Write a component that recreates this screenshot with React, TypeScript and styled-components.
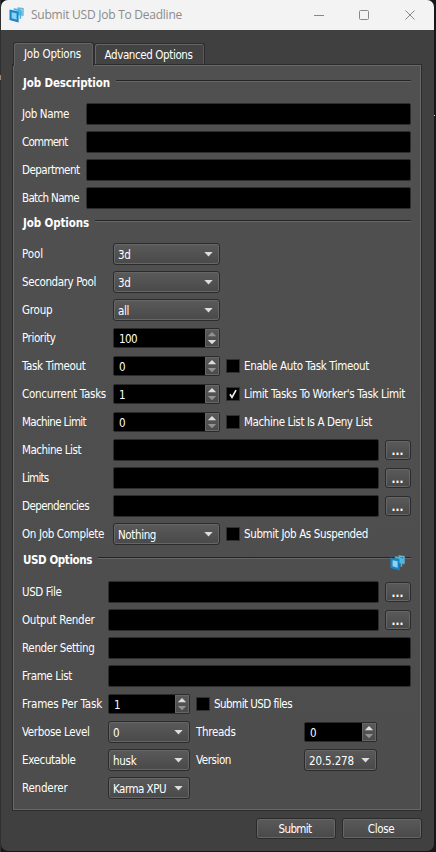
import React, { useLayoutEffect, useRef, useState } from 'react';
import styled, { createGlobalStyle, css } from 'styled-components';

const GlobalStyle = createGlobalStyle`
  * { box-sizing: border-box; }
  html, body { margin: 0; padding: 0; background: #111; overflow: hidden; }
`;

const uiFont = '"DejaVu Sans Condensed", "DejaVu Sans", sans-serif';

const Desktop = styled.div`
  position: relative;
  width: 436px;
  height: 852px;
  padding: 0 2px 1px 1px;
  background: linear-gradient(90deg, #303030 0, #303030 1px, #15171a 1px);
  overflow: hidden;
  font: 11.5px ${uiFont};
  font-stretch: condensed;
  color: #fff;
`;

const Speck = styled.div<{ $x: number; $y: number; $h: number; $color: string }>`
  position: absolute;
  left: ${p => p.$x}px;
  top: ${p => p.$y}px;
  width: 1px;
  height: ${p => p.$h}px;
  background: ${p => p.$color};
`;

const Window = styled.div`
  display: flex;
  flex-direction: column;
  width: 433px;
  height: 851px;
  border-radius: 7px;
  overflow: hidden;
  background: #404040;
`;

const TitleBar = styled.header`
  display: flex;
  align-items: center;
  flex: 0 0 30px;
  height: 30px;
  padding-left: 8px;
  background: #f3f3f3;
  color: #8b8b8b;
  font: 12px "Open Sans", "Noto Sans", sans-serif;
`;

const TitleText = styled.div`
  flex: 1;
  padding-left: 7px;
  line-height: 30px;
  height: 30px;
`;

const WindowControls = styled.div`
  display: flex;
  width: 138px;
  margin-right: 1px;
  svg { display: block; width: 46px; height: 28px; }
`;

const Tabs = styled.nav`
  display: flex;
  align-items: flex-end;
  flex: 0 0 35px;
  height: 35px;
  padding: 12px 0 0 12px;
  position: relative;
  z-index: 1;
`;

const Tab = styled.div<{ $active?: boolean }>`
  display: flex;
  justify-content: center;
  width: ${p => (p.$active ? 81 : 111)}px;
  height: ${p => (p.$active ? 24 : 21)}px;
  margin-bottom: ${p => (p.$active ? -1 : 1)}px;
  padding-right: 2px;
  line-height: ${p => (p.$active ? 23 : 22)}px;
  border: 1px solid #2d2d2d;
  border-bottom: 0;
  border-radius: 3px 3px 0 0;
  background: ${p => (p.$active ? '#505050' : '#434343')};
  box-shadow: inset 1px 1px 0 #666, inset -1px 0 0 ${p => (p.$active ? '#606060' : '#585858')};
`;

const Panel = styled.main`
  flex: 0 0 747px;
  width: 410px;
  height: 747px;
  margin: -1px 0 0 11px;
  padding: 1px 10px 0 9px;
  border: 1px solid #2c2c2c;
  box-shadow: inset 1px 1px 0 #686868, inset -1px -1px 0 #686868;
  background: linear-gradient(#505050, #4d4d4d);
`;

const SectionHeader = styled.h2<{ $h: number; $line: number }>`
  display: flex;
  align-items: flex-start;
  height: ${p => p.$h}px;
  margin: 0;
  padding: ${p => p.$line - 6}px 0 0 1px;
  font: bold 11.5px/18px "DejaVu Sans Condensed", "DejaVu Sans", sans-serif;
  font-stretch: condensed;
`;

const Rule = styled.div`
  flex: 1;
  height: 2px;
  margin: 6px 0 0 6px;
  background: #252525;
  border-bottom: 1px solid #666;
`;

const RuleIcon = styled.div`
  width: 0;
  height: 16px;
  svg { display: block; position: relative; left: -21px; top: 4px; }
`;

const Row = styled.div`
  display: flex;
  align-items: center;
  height: 28px;
`;

const Label = styled.label<{ $w: number }>`
  flex: 0 0 ${p => p.$w}px;
  height: 16px;
  line-height: 17px;
`;

const bevel = css`
  border: 1px solid #2b2b2b;
  border-radius: 3px;
  box-shadow: inset 0 0 0 1px #666;
  background: linear-gradient(#5a5a5a, #494949);
`;

const Field = styled.div`
  flex: 1;
  height: 22px;
  background: #000;
  border: 1px solid #2d2d2d;
  border-radius: 2px;
`;

const Combo = styled.div<{ $w: number }>`
  ${bevel}
  display: flex;
  justify-content: space-between;
  width: ${p => p.$w}px;
  height: 22px;
  padding: 0 6px 0 4px;
  line-height: 22px;
  svg { display: block; margin-top: 8px; }
`;

const Spin = styled.div<{ $w: number }>`
  display: flex;
  width: ${p => p.$w}px;
  height: 20px;
  padding-left: 5px;
  border: 1px solid #2b2b2b;
  border-radius: 2px;
  background: #000;
  line-height: 20px;
`;

const SpinValue = styled.div`
  flex: 1;
`;

const SpinButtons = styled.div`
  width: 14px;
  background: linear-gradient(#5a5a5a, #4a4a4a);
  box-shadow: inset 0 0 0 1px #666;
  svg { display: block; }
`;

const Check = styled.div`
  display: flex;
  align-items: center;
  gap: 4px;
  margin-left: 6px;
  line-height: 16px;
`;

const Box = styled.div`
  width: 14px;
  height: 14px;
  background: #000;
  border: 1px solid #303030;
  svg { display: block; }
`;

const BrowseButton = styled.div`
  ${bevel}
  display: flex;
  justify-content: center;
  width: 26px;
  height: 20px;
  margin-left: 6px;
  padding-right: 1px;
  line-height: 21px;
  font-weight: bold;
`;

const SecondLabel = styled.label`
  width: 108px;
  margin-left: 6px;
  height: 16px;
  line-height: 17px;
`;

const Footer = styled.footer`
  display: flex;
  justify-content: flex-end;
  gap: 6px;
  padding: 7px 12px 0 0;
`;

const PushButton = styled.div`
  ${bevel}
  display: flex;
  justify-content: center;
  width: 80px;
  height: 21px;
  padding-right: 2px;
  line-height: 20px;
`;

const Run = styled.span`
  display: inline-block;
  white-space: pre;
`;

/* Spreads a caption evenly over a fixed number of pixels. */
function Text({ w, children }: { w: number; children: string }) {
  const ref = useRef<HTMLSpanElement>(null);
  const [spacing, setSpacing] = useState(0);
  useLayoutEffect(() => {
    const el = ref.current!;
    el.style.letterSpacing = '0px';
    setSpacing((w - el.getBoundingClientRect().width) / children.length);
  }, [w, children]);
  return <Run ref={ref} style={{ letterSpacing: `${spacing}px` }}>{children}</Run>;
}

const Logo = ({ size }: { size: number }) => (
  <svg width={size} height={size + 1} viewBox="0 0 15 16">
    <path d="M8.6 0.2 14.7 1v7.8l-1.5.6V2.6L8.6 2z" fill="#6fb4d4" />
    <path d="M9 3 13.2 3.6v5.2L9 8.2z" fill="#58bce6" />
    <path d="M4.8 1.2 12.2 2.4v9.2L10.6 12V4.2L4.8 3z" fill="#3cb8ea" />
    <path d="M.5 2.6 9.6 4.4v11.2L.5 13z" fill="#1b84c6" />
    <path d="M2.6 5.2 7.6 6.2v6.5L2.6 11.3z" fill="#8cd3f2" />
  </svg>
);

const Select = ({ w, text, tw }: { w: number; text: string; tw: number }) => (
  <Combo $w={w}>
    <Text w={tw}>{text}</Text>
    <svg width="9" height="5" viewBox="0 0 9 5"><path d="M.3 0h8.4L4.5 4.5z" fill="#ddd" /></svg>
  </Combo>
);

const Spinner = ({ w, text, tw, up = true }: { w: number; text: string; tw: number; up?: boolean }) => (
  <Spin $w={w}>
    <SpinValue><Text w={tw}>{text}</Text></SpinValue>
    <SpinButtons>
      <svg width="14" height="18" viewBox="0 0 14 18">
        <path d="M2.8 7.2h8.4L7 3z" fill={up ? '#ddd' : '#929292'} />
        <path d="M2.8 11h8.4L7 15.2z" fill={up ? '#929292' : '#ddd'} />
      </svg>
    </SpinButtons>
  </Spin>
);

const CheckBox = ({ text, tw, checked }: { text: string; tw: number; checked?: boolean }) => (
  <Check>
    <Box>
      {checked && (
        <svg width="12" height="12" viewBox="0 0 12 12">
          <path d="M3 6.2 5 9.4 9 2.2" fill="none" stroke="#eee" strokeWidth="1.7" />
        </svg>
      )}
    </Box>
    <Text w={tw}>{text}</Text>
  </Check>
);

const Browse = () => <BrowseButton><Text w={12}>...</Text></BrowseButton>;

const Heading = ({ text, tw, h, line, icon }: { text: string; tw: number; h: number; line: number; icon?: boolean }) => (
  <SectionHeader $h={h} $line={line}>
    <Text w={tw}>{text}</Text>
    <Rule />
    {icon && <RuleIcon><Logo size={15} /></RuleIcon>}
  </SectionHeader>
);

type LineProps = { label: string; lw: number; col: number; children: React.ReactNode };
const Line = ({ label, lw, col, children }: LineProps) => (
  <Row>
    <Label $w={col}><Text w={lw}>{label}</Text></Label>
    {children}
  </Row>
);

export default function App() {
  return (
    <Desktop>
      <GlobalStyle />
      <Window>
        <TitleBar>
          <Logo size={15} />
          <TitleText><Text w={151}>Submit USD Job To Deadline</Text></TitleText>
          <WindowControls>
            <svg viewBox="0 0 46 28"><path d="M19 14.5h10" stroke="#888" /></svg>
            <svg viewBox="0 0 46 28"><rect x="18.5" y="9.5" width="9" height="9" rx="1" fill="none" stroke="#888" /></svg>
            <svg viewBox="0 0 46 28"><path d="m18.5 9.5 9 9m0-9-9 9" stroke="#888" /></svg>
          </WindowControls>
        </TitleBar>
        <Tabs>
          <Tab $active><Text w={57}>Job Options</Text></Tab>
          <Tab><Text w={88}>Advanced Options</Text></Tab>
        </Tabs>
        <Panel>
          <Heading text="Job Description" tw={87} h={34} line={14} />
          <Line label="Job Name" lw={47} col={64}><Field /></Line>
          <Line label="Comment" lw={45.5} col={64}><Field /></Line>
          <Line label="Department" lw={57.5} col={64}><Field /></Line>
          <Line label="Batch Name" lw={57} col={64}><Field /></Line>

          <Heading text="Job Options" tw={66} h={28} line={8} />
          <Line label="Pool" lw={21} col={91}><Select w={107} text="3d" tw={12.5} /></Line>
          <Line label="Secondary Pool" lw={74} col={91}><Select w={107} text="3d" tw={12.5} /></Line>
          <Line label="Group" lw={30.5} col={91}><Select w={107} text="all" tw={11} /></Line>
          <Line label="Priority" lw={33.5} col={91}><Spinner w={107} text="100" tw={18} up={false} /></Line>
          <Line label="Task Timeout" lw={63.5} col={91}>
            <Spinner w={107} text="0" tw={7} />
            <CheckBox text="Enable Auto Task Timeout" tw={125} />
          </Line>
          <Line label="Concurrent Tasks" lw={84} col={91}>
            <Spinner w={107} text="1" tw={7} />
            <CheckBox text="Limit Tasks To Worker's Task Limit" tw={161} checked />
          </Line>
          <Line label="Machine Limit" lw={64} col={91}>
            <Spinner w={107} text="0" tw={7} />
            <CheckBox text="Machine List Is A Deny List" tw={128} />
          </Line>
          <Line label="Machine List" lw={59} col={91}><Field /><Browse /></Line>
          <Line label="Limits" lw={26.5} col={91}><Field /><Browse /></Line>
          <Line label="Dependencies" lw={67} col={91}><Field /><Browse /></Line>
          <Line label="On Job Complete" lw={82} col={91}>
            <Select w={107} text="Nothing" tw={38} />
            <CheckBox text="Submit Job As Suspended" tw={124} />
          </Line>

          <Heading text="USD Options" tw={69} h={30} line={9} icon />
          <Line label="USD File" lw={39.5} col={86}><Field /><Browse /></Line>
          <Line label="Output Render" lw={72.5} col={86}><Field /><Browse /></Line>
          <Line label="Render Setting" lw={72.5} col={86}><Field /></Line>
          <Line label="Frame List" lw={50} col={86}><Field /></Line>
          <Line label="Frames Per Task" lw={80} col={86}>
            <Spinner w={82} text="1" tw={7} />
            <CheckBox text="Submit USD files" tw={78} />
          </Line>
          <Line label="Verbose Level" lw={67.5} col={86}>
            <Select w={82} text="0" tw={7} />
            <SecondLabel><Text w={39.5}>Threads</Text></SecondLabel>
            <Spinner w={73} text="0" tw={7} />
          </Line>
          <Line label="Executable" lw={53.5} col={86}>
            <Select w={82} text="husk" tw={23.5} />
            <SecondLabel><Text w={35}>Version</Text></SecondLabel>
            <Select w={73} text="20.5.278" tw={45} />
          </Line>
          <Line label="Renderer" lw={45.5} col={86}><Select w={82} text="Karma XPU" tw={53} /></Line>
        </Panel>
        <Footer>
          <PushButton><Text w={33}>Submit</Text></PushButton>
          <PushButton><Text w={26.5}>Close</Text></PushButton>
        </Footer>
      </Window>
      <Speck $x={0} $y={75} $h={5} $color="#a08878" />
      <Speck $x={434} $y={115} $h={1} $color="#ddd" />
    </Desktop>
  );
}
